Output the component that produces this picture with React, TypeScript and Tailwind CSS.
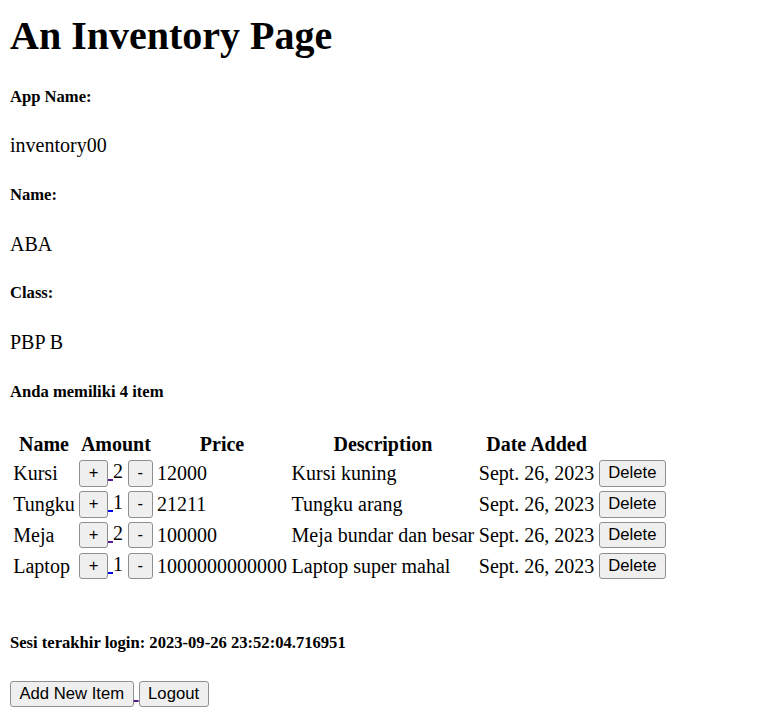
import React from 'react'

const items = [
  { name: 'Kursi', amount: 2, price: '12000', desc: 'Kursi kuning', date: 'Sept. 26, 2023', visited: true },
  { name: 'Tungku', amount: 1, price: '21211', desc: 'Tungku arang', date: 'Sept. 26, 2023', visited: false },
  { name: 'Meja', amount: 2, price: '100000', desc: 'Meja bundar dan besar', date: 'Sept. 26, 2023', visited: true },
  { name: 'Laptop', amount: 1, price: '1000000000000', desc: 'Laptop super mahal', date: 'Sept. 26, 2023', visited: false },
]

const btn =
  "inline-block font-['Liberation_Sans',Arial,sans-serif] text-[16.67px] leading-[normal] text-black bg-[#efefef] border border-[#8f8f8f] rounded-[3px] px-[8.5px] py-[2.2px] align-baseline"

const App = () => {
  return (
    <div className="min-h-screen bg-white px-[10px] pt-[12px] text-black text-[20px] leading-[normal] font-['Liberation_Serif','Times_New_Roman',serif]">
      <h1 className="text-[40px] font-bold mb-[26.8px]">An Inventory Page</h1>

      <h5 className="text-[16.6px] font-bold my-[27.7px]">App Name:</h5>
      <p className="my-[20px]">inventory00</p>

      <h5 className="text-[16.6px] font-bold my-[27.7px]">Name:</h5>
      <p className="my-[20px]">ABA</p>

      <h5 className="text-[16.6px] font-bold my-[27.7px]">Class:</h5>
      <p className="my-[20px]">PBP B</p>

      <h5 className="text-[16.6px] font-bold my-[27.7px]">Anda memiliki 4 item</h5>

      {/* inventory table */}
      <table className="border-separate border-spacing-[2.5px]">
        <thead>
          <tr>
            <th className="p-[1.25px] font-bold text-center">Name</th>
            <th className="p-[1.25px] font-bold text-center">Amount</th>
            <th className="p-[1.25px] font-bold text-center">Price</th>
            <th className="p-[1.25px] font-bold text-center">Description</th>
            <th className="p-[1.25px] font-bold text-center">Date Added</th>
            <th className="p-[1.25px]"></th>
          </tr>
        </thead>
        <tbody>
          {items.map((item) => (
            <tr key={item.name}>
              <td className="p-[1.25px] align-middle">{item.name}</td>
              <td className="p-[1.25px] align-middle whitespace-nowrap">
                <a
                  href="#"
                  className={
                    item.visited
                      ? 'underline text-[#551a8b]'
                      : 'underline text-[#0000ee]'
                  }
                >
                  <button className={btn}>+</button>{' '}
                </a>
                {item.amount}{' '}
                <a href="#">
                  <button className={btn}>-</button>
                </a>
              </td>
              <td className="p-[1.25px] align-middle">{item.price}</td>
              <td className="p-[1.25px] align-middle">{item.desc}</td>
              <td className="p-[1.25px] align-middle">{item.date}</td>
              <td className="p-[1.25px] align-middle">
                <a href="#">
                  <button className={btn}>Delete</button>
                </a>
              </td>
            </tr>
          ))}
        </tbody>
      </table>
      <br />

      <h5 className="text-[16.6px] font-bold my-[27.7px]">
        Sesi terakhir login: 2023-09-26 23:52:04.716951
      </h5>

      <div>
        <a href="#" className="underline text-[#551a8b]">
          <button className={btn}>Add New Item</button>{' '}
        </a>
        <a href="#">
          <button className={btn}>Logout</button>
        </a>
      </div>
    </div>
  )
}

export default App
